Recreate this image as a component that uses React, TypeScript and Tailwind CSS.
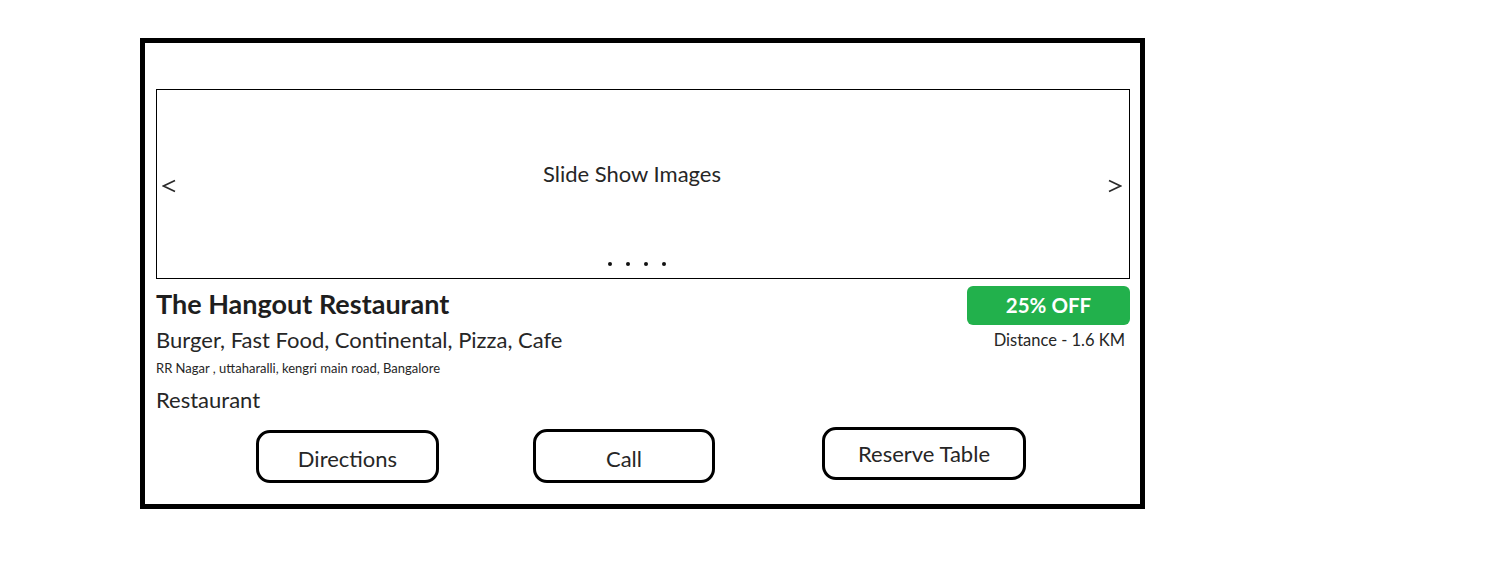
const font = { fontFamily: 'Lato, "Open Sans", sans-serif' };

function ActionButton({ label, className }: { label: string; className: string }) {
  return (
    <button
      className={`flex items-center justify-center border-[3px] border-black rounded-[14px] bg-white text-[22px] text-[#262626] ${className}`}
    >
      {label}
    </button>
  );
}

function Arrow({ dir }: { dir: 'left' | 'right' }) {
  return (
    <svg width="14" height="14" viewBox="0 0 14 14" className="mt-[16px]">
      <polyline
        points={dir === 'left' ? '13,1.5 1.5,7 13,12.5' : '1,1.5 12.5,7 1,12.5'}
        fill="none"
        stroke="#2a2a2a"
        strokeWidth="1.6"
      />
    </svg>
  );
}

export default function App() {
  return (
    <div className="min-h-screen bg-white" style={font}>
      <div className="ml-[140px] pt-[38px]">
        <div className="w-[1005px] h-[471px] border-[5px] border-black pt-[46px] pl-[11px] pr-[10px] flex flex-col">
          {/* slideshow */}
          <div className="h-[190px] border border-black flex flex-col">
            <div className="flex items-start justify-between pl-[5px] pr-[7px] pt-[73px] flex-1">
              <Arrow dir="left" />
              <span className="text-[22px] leading-none text-[#262626] -ml-[20px]">Slide Show Images</span>
              <Arrow dir="right" />
            </div>
            <div className="flex justify-center gap-[14px] pb-[12px] pr-[12px]">
              {[0, 1, 2, 3].map((i) => (
                <span key={i} className="w-[4px] h-[4px] rounded-full bg-[#111]" />
              ))}
            </div>
          </div>

          {/* info */}
          <div className="flex justify-between items-start mt-[7px]">
            <div className="flex flex-col">
              <h1 className="text-[27px] font-bold leading-none text-[#1e1e1e] mt-[4px]">The Hangout Restaurant</h1>
              <p className="text-[22px] leading-none text-[#262626] mt-[12px]">Burger, Fast Food, Continental, Pizza, Cafe</p>
              <p className="text-[13px] leading-none text-[#262626] mt-[11px]">RR Nagar , uttaharalli, kengri main road, Bangalore</p>
              <p className="text-[22px] leading-none text-[#262626] mt-[14px]">Restaurant</p>
            </div>
            <div className="flex flex-col items-end">
              <div className="w-[163px] h-[39px] rounded-[6px] bg-[#22b14c] flex items-center justify-center text-white font-bold text-[20.5px]">
                25% OFF
              </div>
              <p className="text-[16.5px] leading-none text-[#262626] mt-[7px] mr-[5px]">Distance - 1.6 KM</p>
            </div>
          </div>

          {/* actions */}
          <div className="flex items-start mt-[16px] pl-[100px]">
            <ActionButton label="Directions" className="w-[183px] h-[53px] mt-[3px] pt-[4px]" />
            <ActionButton label="Call" className="w-[182px] h-[54px] ml-[94px] mt-[2px] pt-[4px]" />
            <ActionButton label="Reserve Table" className="w-[204px] h-[53px] ml-[107px]" />
          </div>
        </div>
      </div>
    </div>
  );
}
